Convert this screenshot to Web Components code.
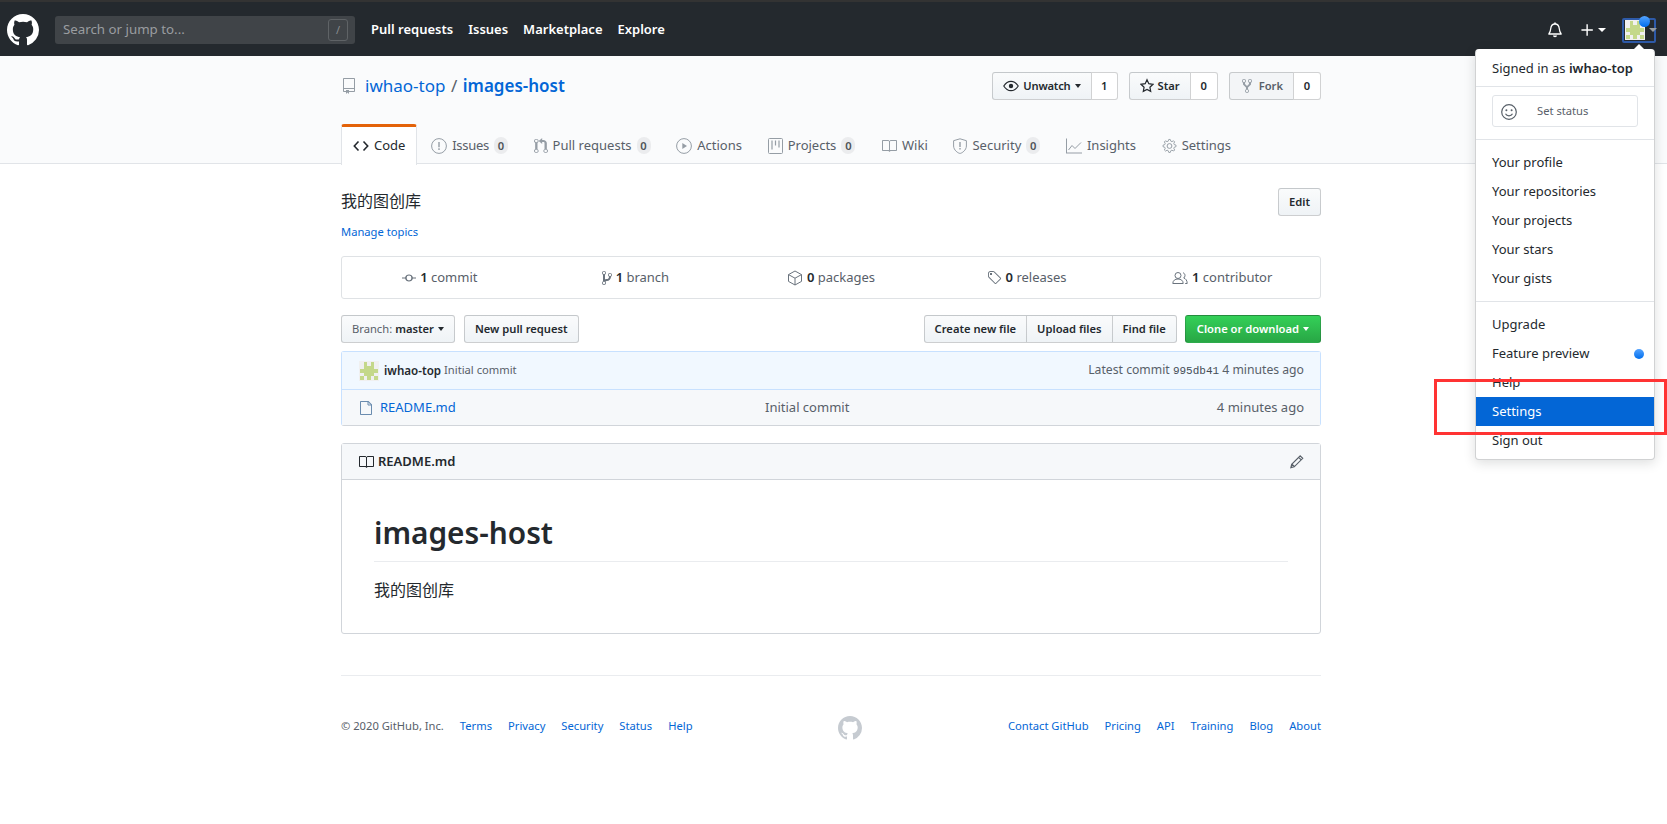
<!DOCTYPE html>
<html lang="en">
<head>
<meta charset="utf-8">
<title>iwhao-top/images-host</title>
<style>
  html, body { margin: 0; padding: 0; background: #fff; }
  body {
    font-family: "Noto Sans", "Noto Sans CJK SC", sans-serif;
    font-size: 13px;
    line-height: 1.5;
    color: #24292e;
  }
</style>
</head>
<body>
<gh-header></gh-header>
<gh-repo-head></gh-repo-head>
<gh-main></gh-main>
<gh-user-menu></gh-user-menu>
<gh-highlight></gh-highlight>

<script>
const ICONS = {
  mark: [16, '<path d="M8 0C3.58 0 0 3.58 0 8c0 3.54 2.29 6.53 5.47 7.59.4.07.55-.17.55-.38 0-.19-.01-.82-.01-1.49-2.01.37-2.53-.49-2.69-.94-.09-.23-.48-.94-.82-1.13-.28-.15-.68-.52-.01-.53.63-.01 1.08.58 1.23.82.72 1.21 1.87.87 2.33.66.07-.52.28-.87.51-1.07-1.78-.2-3.64-.89-3.64-3.95 0-.87.31-1.59.82-2.15-.08-.2-.36-1.02.08-2.12 0 0 .67-.21 2.2.82.64-.18 1.32-.27 2-.27.68 0 1.36.09 2 .27 1.53-1.04 2.2-.82 2.2-.82.44 1.1.16 1.92.08 2.12.51.56.82 1.27.82 2.15 0 3.07-1.87 3.75-3.65 3.95.29.25.54.73.54 1.48 0 1.07-.01 1.93-.01 2.2 0 .21.15.46.55.38A8.013 8.013 0 0016 8c0-4.42-3.58-8-8-8z"/>'],
  repo: [12, '<path d="M12 1v12c0 .55-.45 1-1 1H6v2l-1.5-1.5L3 16v-2H1c-.55 0-1-.45-1-1V1c0-.55.45-1 1-1h10c.55 0 1 .45 1 1zm-1 10H1v2h2v-1h3v1h5v-2zm0-10H1v9h10V1z"/>'],
  code: [16, '<path d="M5.500 3.500L1.300 8l4.200 4.500M10.500 3.500L14.700 8l-4.200 4.500" fill="none" stroke="currentColor" stroke-width="1.600"/>'],
  issue: [16, '<circle cx="8" cy="8" r="7.400" fill="none" stroke="currentColor"/><path d="M7.300 4h1.400v5.200H7.300zm0 6.300h1.400v1.600H7.300z"/>'],
  pr: [14, '<path transform="scale(1.167 1)" d="M11 11.28V5c-.03-.78-.34-1.47-.94-2.06C9.46 2.35 8.78 2.03 8 2H7V0L4 3l3 3V4h1c.27.02.48.11.69.31.21.2.3.42.31.69v6.28A1.993 1.993 0 0010 15a1.993 1.993 0 001-3.72zm-1 2.92c-.66 0-1.2-.55-1.2-1.2 0-.65.55-1.2 1.2-1.2.65 0 1.2.55 1.2 1.2 0 .65-.55 1.2-1.2 1.2zM4 3c0-1.11-.89-2-2-2a1.993 1.993 0 00-1 3.72v6.56A1.993 1.993 0 002 15a1.993 1.993 0 001-3.72V4.72c.59-.34 1-.98 1-1.72zm-.8 10c0 .66-.55 1.2-1.2 1.2-.65 0-1.2-.55-1.2-1.2 0-.65.55-1.2 1.2-1.2.65 0 1.2.55 1.2 1.2zM2 4.2C1.34 4.2.8 3.65.8 3c0-.65.55-1.2 1.2-1.2.65 0 1.2.55 1.2 1.2 0 .65-.55 1.2-1.2 1.2z"/>'],
  play: [16, '<circle cx="8" cy="8" r="7.400" fill="none" stroke="currentColor"/><path d="M6.300 5v6L11 8z"/>'],
  project: [15, '<rect x=".5" y=".5" width="14" height="15" rx="1" fill="none" stroke="currentColor"/><path d="M4 2.500v9M7.500 2.500v5M11 2.500v7" fill="none" stroke="currentColor" stroke-width="1.200"/>'],
  book: [16, '<path d="M16 3v9c0 .55-.45 1-1 1H9.5l-1 1-1-1H2c-.55 0-1-.45-1-1V3c0-.55.45-1 1-1h5.5l1 1 1-1H15c.55 0 1 .45 1 1zm-8 .5L7.5 3H2v9h6V3.5zm7-.5H9.5l-.5.5V12h6V3z"/>'],
  shield: [14, '<path d="M7 .8l6.400 1.900v5.300c0 4.200-4.700 7.400-6.400 7.400S.6 12.200.6 8V2.700z" fill="none" stroke="currentColor"/><path d="M6.300 4h1.400v5H6.300zm0 6h1.400v1.600H6.300z"/>'],
  graph: [16, '<path d="M16 14.500v1H0V.5h1v14h15z"/><path d="M2.500 12L6 7.500l3 3L15 4.500" fill="none" stroke="currentColor"/>'],
  gear: [15, '<path d="M14 8.770v-1.600l-1.940-.640-.450-1.090.880-1.840-1.130-1.130-1.810.910-1.090-.450-.690-1.920h-1.600l-.630 1.940-1.110.450-1.840-.880-1.130 1.130.910 1.810-.450 1.090L0 7.230v1.590l1.940.640.450 1.090-.880 1.840 1.130 1.130 1.810-.910 1.090.450.690 1.920h1.590l.630-1.940 1.110-.450 1.840.880 1.130-1.130-.920-1.810.470-1.090L14 8.750v.020z" transform="translate(1 .5) scale(.93)" fill="none" stroke="currentColor"/><circle cx="7.500" cy="8" r="2.400" fill="none" stroke="currentColor"/>'],
  eye: [16, '<path d="M8 3.300C3.700 3.300.8 8 .8 8s2.900 4.700 7.200 4.700S15.200 8 15.200 8 12.300 3.300 8 3.300z" fill="none" stroke="currentColor" stroke-width="1.200"/><circle cx="8" cy="8" r="2.200"/>'],
  star: [14, '<path d="M13 6.300l-4.200-.600L7 1.800 5.200 5.700l-4.200.600 3.100 2.900-.8 4.200L7 11.400l3.700 2-.8-4.200z" fill="none" stroke="currentColor" stroke-width="1.200"/>'],
  fork: [10, '<path d="M8 1a1.993 1.993 0 00-1 3.720V6L5 8 3 6V4.720A1.993 1.993 0 002 1a1.993 1.993 0 00-1 3.720V6.500l3 3v1.780A1.993 1.993 0 005 15a1.993 1.993 0 001-3.720V9.500l3-3V4.720A1.993 1.993 0 008 1zM2 4.200C1.340 4.200.8 3.650.8 3c0-.650.550-1.200 1.200-1.200.650 0 1.200.550 1.200 1.200 0 .650-.550 1.200-1.200 1.200zm3 10c-.660 0-1.200-.550-1.200-1.200 0-.650.550-1.200 1.200-1.200.650 0 1.200.550 1.200 1.200 0 .650-.550 1.200-1.200 1.200zm3-10c-.660 0-1.200-.550-1.200-1.200 0-.650.550-1.200 1.200-1.200.650 0 1.200.550 1.200 1.200 0 .650-.550 1.200-1.200 1.200z"/>'],
  commit: [14, '<path d="M10.860 7.500C10.500 5.800 9 4.500 7 4.500S3.500 5.800 3.140 7.500H0v1h3.140C3.500 10.200 5 11.500 7 11.500s3.500-1.300 3.860-3H14v-1h-3.140zM7 10.400A2.400 2.400 0 117 5.600a2.400 2.400 0 010 4.800z"/>'],
  branch: [10, '<path d="M10 5c0-1.110-.890-2-2-2a1.993 1.993 0 00-1 3.720v.3c-.020.520-.230.980-.630 1.380-.4.4-.860.610-1.380.630-.830.020-1.480.160-2 .450V4.720a1.993 1.993 0 00-1-3.720C.880 1 0 1.890 0 3a2 2 0 001 1.720v6.560c-.590.350-1 .990-1 1.720 0 1.110.890 2 2 2 1.110 0 2-.890 2-2 0-.530-.2-1-.530-1.360.090-.060.480-.410.590-.470.250-.110.560-.170.940-.170 1.050-.050 1.950-.450 2.750-1.250S8.950 7.770 9 6.730h-.020C9.590 6.370 10 5.730 10 5zM2 1.800c.660 0 1.200.550 1.200 1.200 0 .650-.550 1.200-1.200 1.200C1.350 4.200.8 3.650.8 3c0-.650.550-1.200 1.200-1.200zm0 12.410c-.660 0-1.200-.550-1.200-1.200 0-.650.550-1.200 1.200-1.200.650 0 1.200.550 1.200 1.200 0 .650-.550 1.200-1.200 1.200zm6-8c-.660 0-1.200-.550-1.200-1.200 0-.650.550-1.200 1.200-1.200.650 0 1.200.550 1.200 1.200 0 .650-.550 1.200-1.200 1.200z"/>'],
  pkg: [16, '<path d="M8 1l6.500 3.600v6.800L8 15l-6.500-3.600V4.600zM1.500 4.600L8 8.200l6.500-3.600M8 8.200V15" fill="none" stroke="currentColor"/>'],
  tag: [15, '<path d="M7.730 1.730C7.260 1.260 6.620 1 5.960 1H3.500C2.130 1 1 2.130 1 3.500v2.470c0 .660.270 1.300.730 1.770l6.060 6.060c.390.390 1.020.390 1.410 0l4.590-4.590a.996.996 0 000-1.410L7.730 1.730zM2.380 7.090c-.310-.3-.470-.7-.470-1.130V3.500c0-.880.720-1.590 1.590-1.590h2.470c.420 0 .830.160 1.130.470l6.140 6.130-4.730 4.730-6.130-6.150zM3.010 3h2v2H3V3h.010z"/>'],
  people: [16, '<circle cx="6" cy="5.500" r="3" fill="none" stroke="currentColor"/><path d="M.8 13.500c0-3 2.300-4.500 5.200-4.500s5.200 1.500 5.200 4.500zM11 2.800c1.300.3 2 1.400 2 2.700 0 1.100-.5 2-1.300 2.500 1.900.6 3.500 2.300 3.500 5.500h-2" fill="none" stroke="currentColor"/>'],
  file: [12, '<path d="M12 4.500V14c0 .550-.450 1-1 1H1c-.550 0-1-.450-1-1V2c0-.550.450-1 1-1h7.500L12 4.500zM11 5L8 2H1v12h10V5z"/><path d="M8 1.500v3.500h3.500" fill="none" stroke="currentColor"/>'],
  pencil: [14, '<path d="M10.200 1.800l2.500 2.500-8.500 8.500-3.300.9.800-3.400zM8.700 3.300l2.500 2.500M2.200 10.300l2.100 2.100" fill="none" stroke="currentColor" stroke-width="1.200"/>'],
  bell: [14, '<path d="M7 2c2.600 0 4 2 4.300 4.700.2 2 .5 3.600 1.700 4.800v.5H1v-.5c1.200-1.200 1.500-2.800 1.700-4.800C3 4 4.400 2 7 2z" fill="none" stroke="currentColor" stroke-width="1.300"/><path d="M6.200.5h1.600V2H6.200zM5 13.500h4c0 1-.9 1.700-2 1.700s-2-.7-2-1.700z"/>'],
  plus: [14, '<path d="M6.200 1.500h1.600v5.700h5.700v1.600H7.800v5.700H6.200V8.800H.5V7.200h5.700z"/>'],
  smiley: [16, '<circle cx="8" cy="8" r="7.300" fill="none" stroke="currentColor" stroke-width="1.200"/><circle cx="5.400" cy="6.200" r="1"/><circle cx="10.600" cy="6.200" r="1"/><path d="M4.500 9.800c.7 1.300 2 2 3.500 2s2.800-.7 3.500-2" fill="none" stroke="currentColor" stroke-width="1.200"/>']
};

class GhIcon extends HTMLElement {
  connectedCallback() {
    const [w, body] = ICONS[this.getAttribute("name")];
    const h = parseFloat(this.getAttribute("size")) || 16;
    const vh = 16;
    this.attachShadow({ mode: "open" }).innerHTML = `
      <style>:host { display: inline-flex; flex: none; }</style>
      <svg xmlns="http://www.w3.org/2000/svg" width="${w * h / vh}" height="${h}" viewBox="0 0 ${w} ${vh}" fill="currentColor">${body}</svg>`;
  }
}
customElements.define("gh-icon", GhIcon);

class GhIdenticon extends HTMLElement {
  connectedCallback() {
    const size = parseInt(this.getAttribute("size")) || 20;
    const rows = ["01010", "01110", "11111", "01110", "10101"];
    let rects = "";
    rows.forEach((r, y) => [...r].forEach((c, x) => {
      if (c === "1") rects += `<rect x="${x + .25}" y="${y + .25}" width="1" height="1"/>`;
    }));
    this.attachShadow({ mode: "open" }).innerHTML = `
      <style>:host { display: inline-flex; flex: none; }</style>
      <svg xmlns="http://www.w3.org/2000/svg" width="${size}" height="${size}" viewBox="0 0 5.500 5.500" shape-rendering="crispEdges">
        <rect width="5.500" height="5.500" fill="#f0f0f0"/><g fill="#c4d88a">${rects}</g>
      </svg>`;
  }
}
customElements.define("gh-identicon", GhIdenticon);

class GhHeader extends HTMLElement {
  connectedCallback() {
    this.attachShadow({ mode: "open" }).innerHTML = `
      <style>
        :host {
          display: flex; align-items: center; box-sizing: border-box; height: 56px;
          padding: 2px 0 0 7px; background: #24292e; border-top: 2px solid #333; color: #fff;
        }
        .logo { margin-right: 16px; }
        .search {
          display: flex; align-items: center; justify-content: space-between; box-sizing: border-box;
          width: 300px; height: 28px; padding: 0 7px 0 8px; border-radius: 3px;
          background: #404448; color: #9a9da0; font-size: 13.300px;
        }
        .slash {
          width: 18px; height: 20px; border: 1px solid #5f6366; border-radius: 3px;
          color: #8a8d90; font-size: 11px; line-height: 20px; text-align: center;
        }
        nav { display: flex; gap: 15px; margin-left: 16px; font-weight: 600; }
        .right { margin-left: auto; display: flex; align-items: center; }
        .plus { display: flex; align-items: center; gap: 5px; margin-left: 19px; }
        .caret { width: 0; height: 0; border: 4px solid transparent; border-top-color: currentColor; border-bottom: 0; }
        .avatar {
          position: relative; display: flex; align-items: center; gap: 4px; box-sizing: border-box;
          width: 34px; height: 25px; margin: 0 11px 0 16px; padding-left: 1px;
          border: 2px solid #2e5aa8; border-radius: 2px;
        }
        .avatar .caret { color: #9a9da0; }
        .dot {
          position: absolute; left: 15px; top: -4px; width: 11px; height: 11px; border-radius: 50%;
          background-image: linear-gradient(#54a3ff, #006eed);
        }
      </style>
      <gh-icon class="logo" name="mark" size="32"></gh-icon>
      <div class="search"><span>Search or jump to...</span><span class="slash">/</span></div>
      <nav><span>Pull requests</span><span>Issues</span><span>Marketplace</span><span>Explore</span></nav>
      <div class="right">
        <gh-icon name="bell" size="16"></gh-icon>
        <div class="plus"><gh-icon name="plus" size="14"></gh-icon><span class="caret"></span></div>
        <div class="avatar"><gh-identicon size="20"></gh-identicon><span class="caret"></span><span class="dot"></span></div>
      </div>`;
  }
}
customElements.define("gh-header", GhHeader);

class GhButton extends HTMLElement {
  connectedCallback() {
    this.attachShadow({ mode: "open" }).innerHTML = `
      <style>
        :host {
          display: inline-flex; align-items: center; gap: 4px; box-sizing: border-box; height: 28px;
          padding: 0 10px; font-size: 11.200px; font-weight: 600; color: #24292e; white-space: nowrap;
          background: linear-gradient(#fafbfc, #eff3f6); border: 1px solid rgba(27,31,35,.2); border-radius: 3px;
        }
        :host([first]) { border-radius: 3px 0 0 3px; }
        :host([mid]) { border-radius: 0; margin-left: -1px; }
        :host([last]) { border-radius: 0 3px 3px 0; margin-left: -1px; }
        :host([green]) {
          padding: 0 11px; color: #fff; background: linear-gradient(#34d058, #28a745); border-color: rgba(27,31,35,.2);
        }
        :host([muted]) { background: #f3f5f7; color: #586069; padding-left: 12px; gap: 5px; }
      </style><slot></slot>`;
  }
}
customElements.define("gh-button", GhButton);

class GhCaret extends HTMLElement {
  connectedCallback() {
    this.attachShadow({ mode: "open" }).innerHTML = `
      <style>:host { display: inline-block; width: 0; height: 0; border: 3.500px solid transparent; border-top: 4px solid currentColor; border-bottom: 0; }</style>`;
  }
}
customElements.define("gh-caret", GhCaret);

class GhAction extends HTMLElement {
  connectedCallback() {
    const count = this.getAttribute("count");
    this.attachShadow({ mode: "open" }).innerHTML = `
      <style>
        :host { display: inline-flex; }
        .count {
          box-sizing: border-box; display: flex; align-items: center; justify-content: center;
          height: 28px; min-width: var(--count-w, 28px); margin-left: -1px; font-size: 11.200px; font-weight: 600; color: #24292e;
          background: #fff; border: 1px solid rgba(27,31,35,.2); border-radius: 0 3px 3px 0;
        }
      </style>
      <gh-button first ${this.hasAttribute("muted") ? "muted" : ""}><slot></slot></gh-button>
      <span class="count">${count}</span>`;
  }
}
customElements.define("gh-action", GhAction);

class GhTab extends HTMLElement {
  connectedCallback() {
    const count = this.getAttribute("count");
    this.attachShadow({ mode: "open" }).innerHTML = `
      <style>
        :host {
          display: flex; align-items: center; gap: 5px; box-sizing: border-box; height: 40px;
          padding: 3px 12.850px 0; color: #586069; white-space: nowrap;
        }
        :host([selected]) {
          padding: 0 11px; margin-right: 1px; margin-bottom: -1px; height: 41px; color: #24292e; background: #fff;
          border: 1px solid #e1e4e8; border-top: 3px solid #e36209; border-bottom: 0; border-radius: 3px 3px 0 0;
        }
        gh-icon { color: #959da5; }
        :host([selected]) gh-icon { color: #24292e; }
        .counter {
          min-width: 14px; height: 17px; line-height: 17px; border-radius: 10px; text-align: center;
          background: rgba(27,31,35,.08); font-size: 11.200px; font-weight: 600; color: #24292e; opacity: .8;
        }
      </style>
      <gh-icon name="${this.getAttribute("icon")}"></gh-icon><slot></slot>${count !== null ? `<span class="counter">${count}</span>` : ""}`;
  }
}
customElements.define("gh-tab", GhTab);

class GhRepoHead extends HTMLElement {
  connectedCallback() {
    this.attachShadow({ mode: "open" }).innerHTML = `
      <style>
        :host { display: block; box-sizing: border-box; height: 108px; background: #fafbfc; border-bottom: 1px solid #e1e4e8; }
        .wrap { width: 980px; margin-left: 341px; }
        .top { display: flex; align-items: center; justify-content: space-between; padding-top: 16px; height: 28px; margin-bottom: 24px; }
        h1 { display: flex; align-items: center; margin: 0; font-size: 17px; font-weight: 400; color: #586069; line-height: 28px; }
        h1 gh-icon { color: #959da5; margin: 0 10px 0 2px; }
        a { color: #0366d6; }
        b { font-weight: 600; color: #0366d6; }
        .sep { margin: 0 5.500px; }
        .actions { display: flex; gap: 11px; }
        .tabs { display: flex; height: 40px; font-size: 13px; }
      </style>
      <div class="wrap">
        <div class="top">
          <h1><gh-icon name="repo"></gh-icon><a>iwhao-top</a><span class="sep">/</span><b>images-host</b></h1>
          <div class="actions">
            <gh-action count="1" style="--count-w:27px;letter-spacing:-.2px"><gh-icon name="eye"></gh-icon>Unwatch<gh-caret></gh-caret></gh-action>
            <gh-action count="0"><gh-icon name="star"></gh-icon>Star</gh-action>
            <gh-action count="0" muted><gh-icon name="fork" style="color:#959da5;margin-right:2px"></gh-icon>Fork</gh-action>
          </div>
        </div>
        <div class="tabs">
          <gh-tab icon="code" selected>Code</gh-tab>
          <gh-tab icon="issue" count="0" style="letter-spacing:-.3px">Issues</gh-tab>
          <gh-tab icon="pr" count="0">Pull requests</gh-tab>
          <gh-tab icon="play">Actions</gh-tab>
          <gh-tab icon="project" count="0">Projects</gh-tab>
          <gh-tab icon="book">Wiki</gh-tab>
          <gh-tab icon="shield" count="0">Security</gh-tab>
          <gh-tab icon="graph">Insights</gh-tab>
          <gh-tab icon="gear">Settings</gh-tab>
        </div>
      </div>`;
  }
}
customElements.define("gh-repo-head", GhRepoHead);

class GhSummary extends HTMLElement {
  connectedCallback() {
    const items = [["commit", "1", "commit"], ["branch", "1", "branch"], ["pkg", "0", "packages"], ["tag", "0", "releases"], ["people", "1", "contributor"]];
    this.attachShadow({ mode: "open" }).innerHTML = `
      <style>
        :host {
          display: grid; grid-template-columns: repeat(5, 1fr); box-sizing: border-box; height: 43px;
          border: 1px solid #dfe2e5; border-radius: 3px; color: #586069;
        }
        div { display: flex; align-items: center; justify-content: center; gap: 4px; }
        b { font-weight: 600; color: #24292e; }
        gh-icon { color: #6a737d; }
      </style>
      ${items.map(([i, n, t]) => `<div><gh-icon name="${i}"></gh-icon><span><b>${n}</b> ${t}</span></div>`).join("")}`;
  }
}
customElements.define("gh-summary", GhSummary);

class GhFileTable extends HTMLElement {
  connectedCallback() {
    this.attachShadow({ mode: "open" }).innerHTML = `
      <style>
        :host { display: block; box-sizing: border-box; height: 75px; border: 1px solid #c8e1ff; border-bottom-color: #d1d5da; border-radius: 3px; font-size: 13px; }
        .commit {
          display: flex; align-items: center; box-sizing: border-box; height: 38px; padding: 0 16px 0 17px;
          background: #f1f8ff; border-bottom: 1px solid #c8e1ff; font-size: 11.200px; color: #586069;
        }
        .commit b { font-size: 11.600px; font-weight: 600; color: #24292e; margin: 0 3px 0 5px; }
        .meta { margin-left: auto; font-size: 12.200px; }
        code { font-family: "Liberation Mono", monospace; font-size: 11px; color: #444d56; }
        .file {
          display: grid; grid-template-columns: 405px 1fr auto; align-items: center; box-sizing: border-box; height: 35px;
          padding: 0 16px 0 18px; background: #f6f8fa; color: #586069;
        }
        .name { display: flex; align-items: center; gap: 8px; color: #0366d6; }
        .name gh-icon { color: #6a8caf; }
      </style>
      <div class="commit"><gh-identicon size="20"></gh-identicon><b>iwhao-top</b><span>Initial commit</span>
        <span class="meta">Latest commit <code>995db41</code> 4 minutes ago</span></div>
      <div class="file"><span class="name"><gh-icon name="file"></gh-icon>README.md</span><span>Initial commit</span><span>4 minutes ago</span></div>`;
  }
}
customElements.define("gh-file-table", GhFileTable);

class GhReadme extends HTMLElement {
  connectedCallback() {
    this.attachShadow({ mode: "open" }).innerHTML = `
      <style>
        :host { display: block; box-sizing: border-box; height: 191px; border: 1px solid #d1d5da; border-radius: 3px; }
        header {
          display: flex; align-items: center; gap: 4px; box-sizing: border-box; height: 36px; padding: 0 16px;
          background: #f6f8fa; border-bottom: 1px solid #d1d5da; font-weight: 600;
        }
        header .edit { margin-left: auto; color: #586069; }
        article { padding: 32px; }
        h1 { margin: 0 0 16px; padding-bottom: 8px; font-size: 29.800px; font-weight: 600; line-height: 41px; border-bottom: 1px solid #eaecef; }
        p { margin: 0; font-size: 16px; line-height: 24px; }
      </style>
      <header><gh-icon name="book"></gh-icon>README.md<gh-icon class="edit" name="pencil"></gh-icon></header>
      <article><h1>images-host</h1><p>我的图创库</p></article>`;
  }
}
customElements.define("gh-readme", GhReadme);

class GhFooter extends HTMLElement {
  connectedCallback() {
    const left = ["Terms", "Privacy", "Security", "Status", "Help"];
    const right = ["Contact GitHub", "Pricing", "API", "Training", "Blog", "About"];
    const links = (l) => l.map((t) => `<a>${t}</a>`).join("");
    this.attachShadow({ mode: "open" }).innerHTML = `
      <style>
        :host {
          display: flex; justify-content: space-between; align-items: flex-start; margin-top: 41px; padding-top: 40px;
          border-top: 1px solid #eaecef; font-size: 11.200px; line-height: 19px; color: #586069;
        }
        .col { display: flex; gap: 16px; }
        a { color: #0366d6; }
        gh-icon { color: #c6cbd1; }
      </style>
      <div class="col"><span>© 2020 GitHub, Inc.</span>${links(left)}</div>
      <gh-icon name="mark" size="24"></gh-icon>
      <div class="col">${links(right)}</div>`;
  }
}
customElements.define("gh-footer", GhFooter);

class GhMain extends HTMLElement {
  connectedCallback() {
    this.attachShadow({ mode: "open" }).innerHTML = `
      <style>
        :host { display: block; width: 980px; margin-left: 341px; padding-top: 24px; }
        .desc { display: flex; align-items: center; justify-content: space-between; height: 28px; font-size: 16px; }
        .desc span { margin-bottom: 3px; }
        .topics { margin: 7px 0 15px; height: 18px; line-height: 18px; font-size: 11.200px; color: #0366d6; }
        .bar { display: flex; align-items: center; margin: 16px 0 8px; }
        .bar .push { margin-left: auto; display: flex; }
        .label { color: #586069; font-weight: 400; margin-right: -1px; }
        .group { display: flex; margin-right: 8px; }
      </style>
      <div class="desc"><span>我的图创库</span><gh-button>Edit</gh-button></div>
      <div class="topics">Manage topics</div>
      <gh-summary></gh-summary>
      <div class="bar">
        <gh-button style="margin-right:9px"><span class="label">Branch:</span>master<gh-caret></gh-caret></gh-button>
        <gh-button>New pull request</gh-button>
        <div class="push">
          <div class="group">
            <gh-button first>Create new file</gh-button>
            <gh-button mid>Upload files</gh-button>
            <gh-button last>Find file</gh-button>
          </div>
          <gh-button green>Clone or download<gh-caret></gh-caret></gh-button>
        </div>
      </div>
      <gh-file-table></gh-file-table>
      <gh-readme style="margin-top:17px"></gh-readme>
      <gh-footer></gh-footer>`;
  }
}
customElements.define("gh-main", GhMain);

class GhUserMenu extends HTMLElement {
  connectedCallback() {
    const item = (t) => `<div class="item">${t}</div>`;
    this.attachShadow({ mode: "open" }).innerHTML = `
      <style>
        :host {
          position: absolute; left: 1475px; top: 49px; width: 180px; box-sizing: border-box;
          background: #fff; border: 1px solid rgba(27,31,35,.2); border-top-color: #fff; border-radius: 4px;
          box-shadow: 0 3px 12px rgba(27,31,35,.15); font-size: 13px; color: #24292e; padding-bottom: 4px;
        }
        .arrow {
          position: absolute; left: 156px; top: -6px; width: 0; height: 0;
          border: 7px solid transparent; border-top: 0; border-bottom: 7px solid #fff;
        }
        .signed { height: 36px; line-height: 36px; padding: 0 16px; white-space: nowrap; }
        .signed b { font-weight: 600; }
        hr { height: 1px; margin: 0; border: 0; background: #e1e4e8; }
        .status { padding: 8px 16px 12px; }
        .status div {
          display: flex; align-items: center; box-sizing: border-box; height: 32px; padding: 1px 0 0 8px;
          border: 1px solid #e1e4e8; border-radius: 3px; font-size: 11.200px; color: #586069;
        }
        .status gh-icon { color: #586069; margin-right: 20px; }
        .list { padding: 8px 0; }
        .list.last { padding-bottom: 0; }
        .item { display: flex; align-items: center; justify-content: space-between; box-sizing: border-box; height: 29px; padding: 1px 16px 0; }
        .item.active { background: #0366d6; color: #fff; }
        .dot { width: 10px; height: 10px; border-radius: 50%; margin-right: -6px; background: linear-gradient(#54a3ff, #006eed); }
      </style>
      <span class="arrow"></span>
      <div class="signed">Signed in as <b>iwhao-top</b></div>
      <hr>
      <div class="status"><div><gh-icon name="smiley"></gh-icon>Set status</div></div>
      <hr>
      <div class="list">${["Your profile", "Your repositories", "Your projects", "Your stars", "Your gists"].map(item).join("")}</div>
      <hr>
      <div class="list last">
        ${item("Upgrade")}
        <div class="item">Feature preview<span class="dot"></span></div>
        ${item("Help")}
        <div class="item active">Settings</div>
        ${item("Sign out")}
      </div>`;
  }
}
customElements.define("gh-user-menu", GhUserMenu);

class GhHighlight extends HTMLElement {
  connectedCallback() {
    this.attachShadow({ mode: "open" }).innerHTML = `
      <style>
        :host {
          position: absolute; left: 1434px; top: 379px; width: 233px; height: 56px; box-sizing: border-box;
          border: 3px solid #f33; pointer-events: none;
        }
      </style>`;
  }
}
customElements.define("gh-highlight", GhHighlight);
</script>
</body>
</html>
